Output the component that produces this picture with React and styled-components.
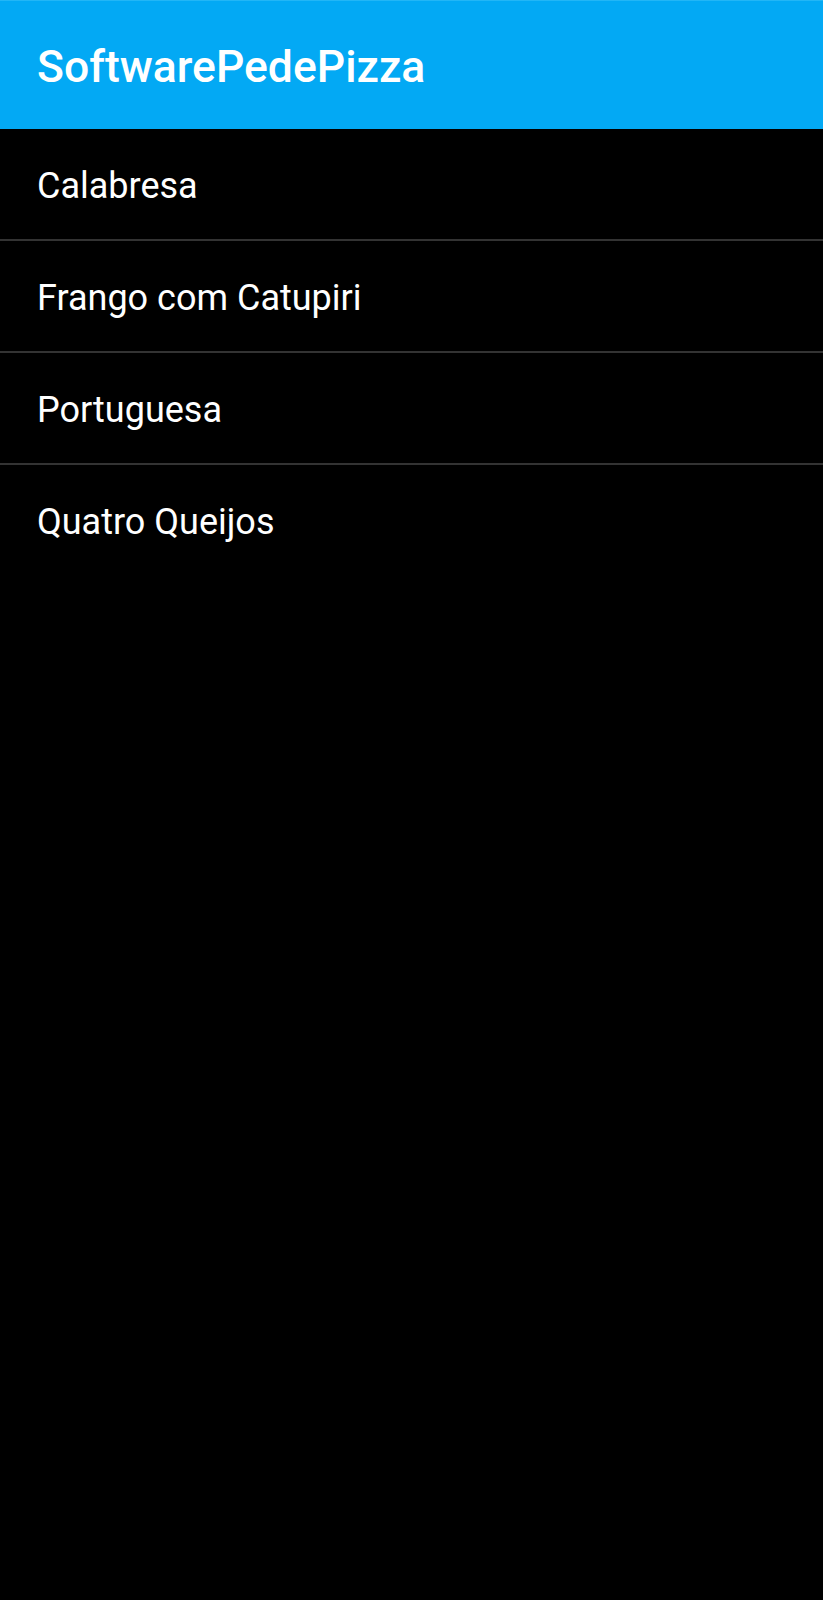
import styled, { createGlobalStyle } from "styled-components";

const GlobalStyle = createGlobalStyle`
  html, body {
    margin: 0;
    padding: 0;
    background: #000;
  }
  body {
    font-family: Roboto, "Noto Sans", sans-serif;
  }
`;

const pizzas = ["Calabresa", "Frango com Catupiri", "Portuguesa", "Quatro Queijos"];

const Screen = styled.div`
  width: 823px;
  min-height: 1600px;
  background: #000;
  display: flex;
  flex-direction: column;
`;

const AppBar = styled.header`
  height: 129px;
  background: #03a9f4;
  border-top: 1px solid #22b6f6;
  display: flex;
  align-items: center;
  padding: 3px 37px 0;
  box-sizing: border-box;
`;

const Title = styled.h1`
  margin: 0;
  color: #fff;
  font-size: 44.5px;
  font-weight: 500;
`;

const List = styled.ul`
  list-style: none;
  margin: 0;
  padding: 0;
`;

const Item = styled.li`
  height: 106px;
  padding: 4px 37px 0;
  display: flex;
  align-items: center;
  color: #fff;
  font-size: 36px;
  font-weight: 400;
  border-bottom: ${(p) => (p.$last ? "none" : "2px solid #333")};
`;

export default function App() {
  return (
    <Screen>
      <GlobalStyle />
      <AppBar>
        <Title>SoftwarePedePizza</Title>
      </AppBar>
      <List>
        {pizzas.map((name, i) => (
          <Item key={name} $last={i === pizzas.length - 1}>
            {name}
          </Item>
        ))}
      </List>
    </Screen>
  );
}
